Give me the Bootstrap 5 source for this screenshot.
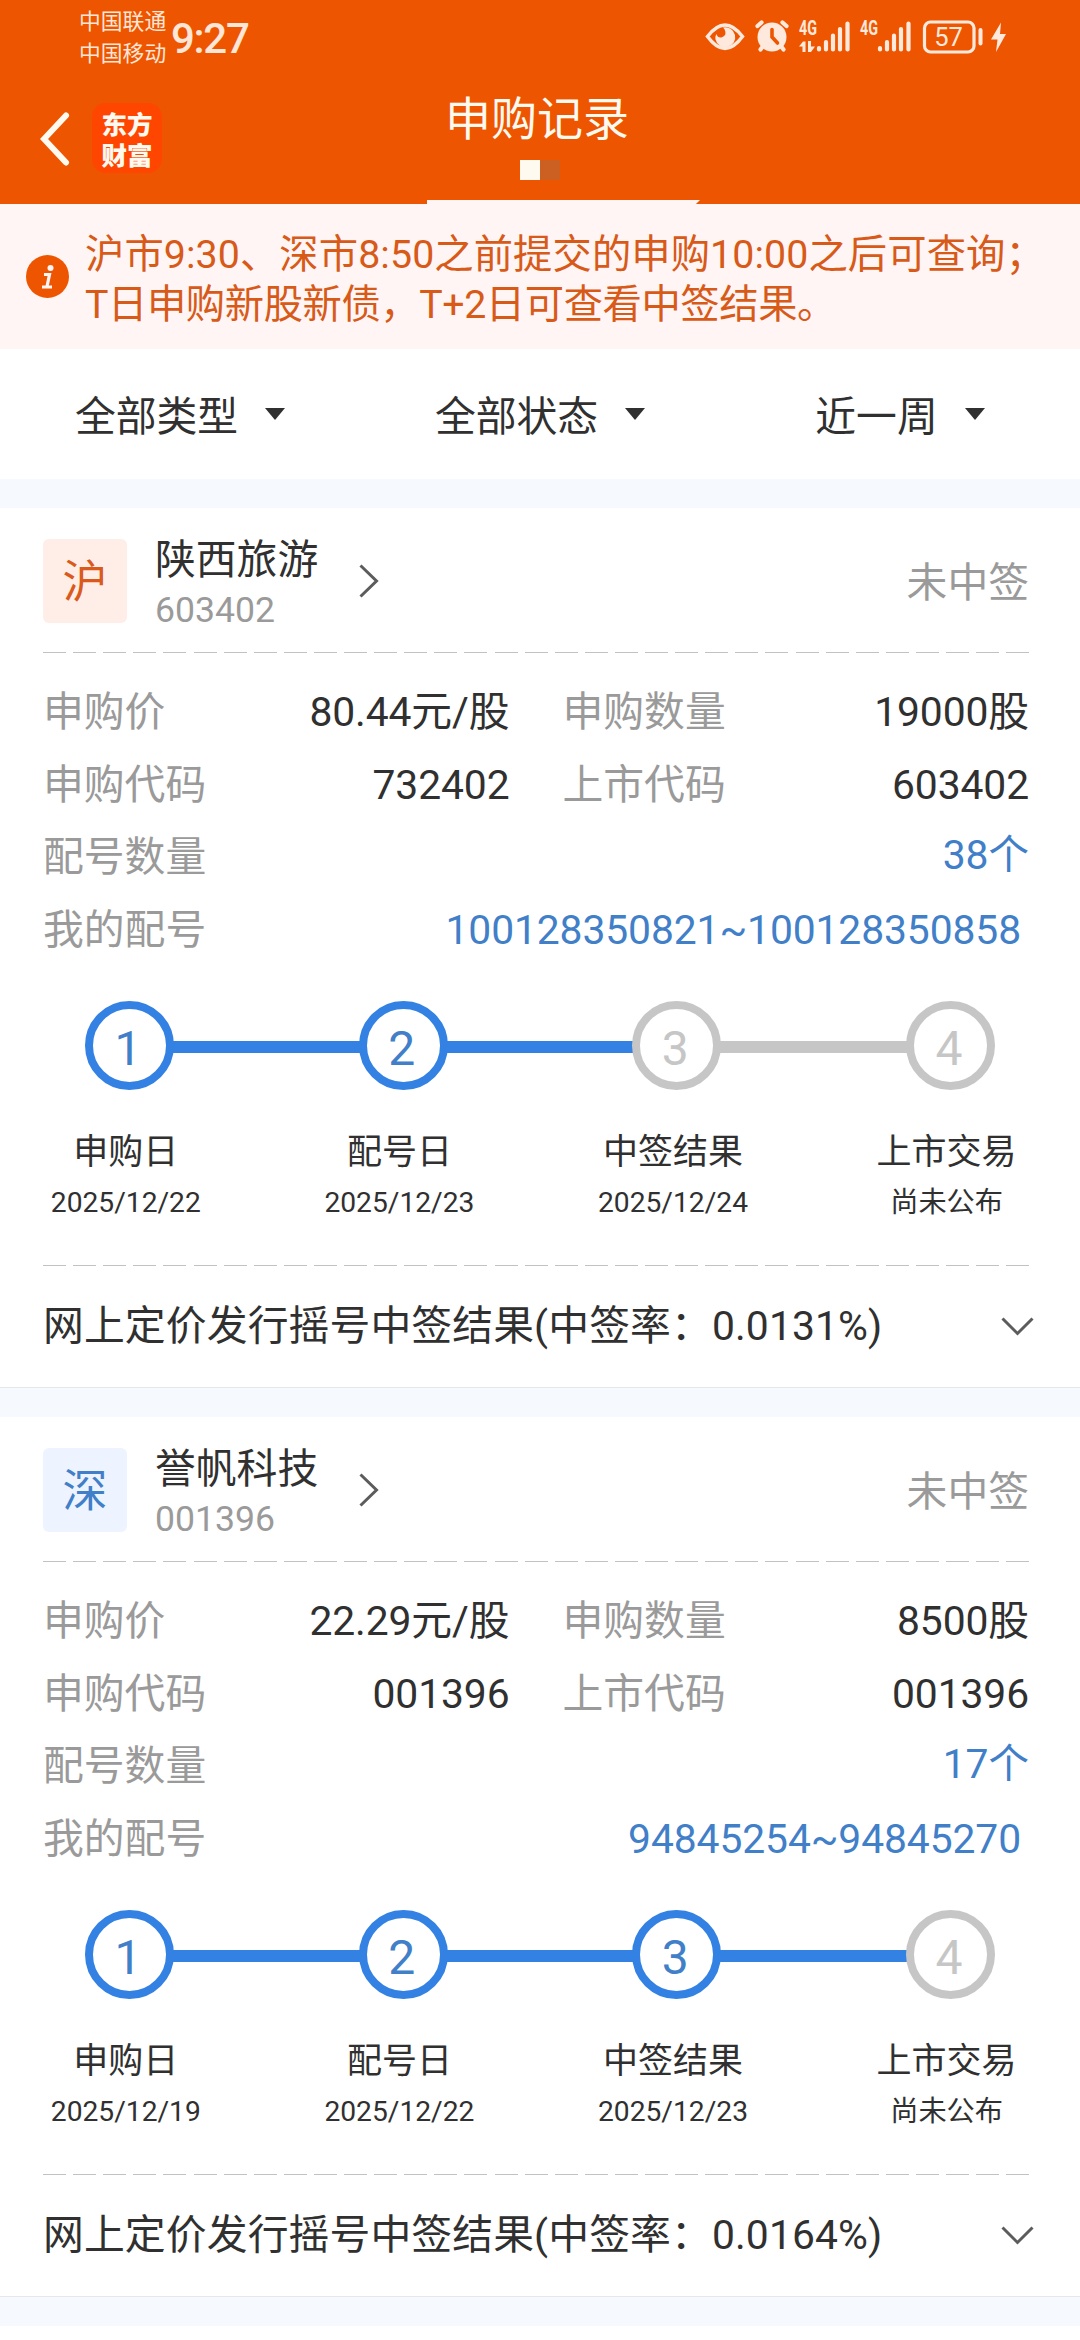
<!DOCTYPE html>
<html lang="zh-CN">
<head>
<meta charset="utf-8">
<meta name="viewport" content="width=device-width, initial-scale=1">
<title>申购记录</title>
<link href="https://cdn.jsdelivr.net/npm/bootstrap@5.3.0/dist/css/bootstrap.min.css" rel="stylesheet">
<style>
  :root { --brand:#ee5500; --blue:#3381e3; --link:#417fc8; --ink:#303030; --muted:#9a9a9a; --off:#c6c6c6; }
  body { font-family:Roboto,"Noto Sans CJK SC",sans-serif; font-size:40.8px; line-height:50px; color:var(--ink); background:#fff; width:1080px; height:2340px; overflow:hidden; }
  svg { display:block; flex:none; }
  .app-top { background:var(--brand); height:204px; color:#fffaf0; }
  .status { height:76px; padding-left:79px; color:#ffe6d6; }
  .carriers { font-size:21.8px; line-height:32px; padding-top:6px; width:92px; }
  .clock { font-size:42px; line-height:77px; letter-spacing:-1.3px; font-weight:500; }
  .status svg { margin-left:auto; }
  .titlebar { height:128px; }
  .back { margin:36px 0 0 40px; }
  .logo { width:70px; height:70px; margin:27px 0 0 22px; border-radius:14px; background:#ff4600; font-family:"Noto Sans CJK SC",sans-serif; font-weight:900; font-size:25.5px; line-height:31px; }
  .page-title { font-size:46px; line-height:56px; width:273px; margin-left:265px; height:128px; padding-top:15px; }
  .page-title > span { display:block; padding-left:18px; }
  .pager { margin:13px 0 0 93px; }
  .pager i { width:20px; height:20px; background:#fffaf0; }
  .pager i + i { background:#cc5f22; }
  .tab-line { height:4px; background:#fff5f5; width:273px; margin:20px 0 0; clip-path:polygon(0 0,100% 0,98.500% 100%,0 100%); }
  .notice { background:#fff5f5; height:145px; padding-left:26px; color:#d85a18; font-size:39.3px; line-height:50px; }
  .notice p { margin:7px 0 0 16px; white-space:nowrap; letter-spacing:.1px; }
  .notice p span { letter-spacing:-.4px; }
  .filters { height:130px; }
  .filters .col > div { gap:27px; }
  .filters span { padding-top:6px; }
  .band { height:29px; background:#f6faff; }
  .record { height:880px; border-bottom:1px solid #e7e7e7; padding:0 51px 0 43px; }
  .head { height:144px; padding-top:1px; }
  .market { width:84px; height:84px; padding-top:4px; border-radius:6px; font-size:45px; background:#ffeee7; color:#d95a1c; }
  .market.sz { background:#edf3ff; color:var(--link); }
  .who { margin:8px 42px 0 28px; line-height:50px; width:162px; }
  .who small { display:block; font-size:35.6px; line-height:50px; color:var(--muted); }
  .soft { color:var(--muted); }
  .result { padding-top:5px; }
  .dash { height:1px; background:repeating-linear-gradient(90deg,#c2c2c2 0 23px,transparent 23px 30.1px); }
  .facts { padding-top:23px; letter-spacing:-.1px; }
  .facts .soft { letter-spacing:0; }
  .facts > div { height:72.6px; }
  .half { width:466.5px; }
  .blue { color:var(--link); }
  .track { margin:35px 34px 0 42px; height:89px; }
  .dot { width:89px; height:89px; border:8px solid var(--off); border-radius:50%; color:var(--off); font-size:48px; padding:7px 3px 0 0; flex:none; }
  .seg { height:12px; background:var(--off); flex:1; margin:3px -2px 0; }
  .dot.on { border-color:var(--blue); color:var(--link); }
  .seg.on { background:var(--blue); }
  .names { margin:38px -60px 0 -54px; height:137px; }
  .names > div { width:273.6px; flex:none; font-size:35px; line-height:50px; }
  .names small { display:block; font-size:28.2px; line-height:50px; }
  .foot { height:120px; letter-spacing:.13px; margin-right:-5px; }
</style>
<script src="https://cdn.jsdelivr.net/npm/bootstrap@5.3.0/dist/js/bootstrap.bundle.min.js"></script>
</head>
<body>
<header class="app-top">
  <div class="status d-flex">
    <div class="carriers">中国联通<br>中国移动</div>
    <div class="clock">9:27</div>
    <svg width="380" height="76" viewBox="700 0 380 76" fill="#ffe9dc">
      <path d="M707.500 36.500Q725 13.500 742.500 36.500Q725 60.500 707.500 36.500Z" fill="none" stroke="#ffe9dc" stroke-width="3.500"/>
      <path d="M723 27.500a10 10 0 1 1-7.500 12q-.5-3 .8-5.500q1.500 4 5 3.500q5-1.500 4-6q-.5-2.500-2.300-4z"/>
      <circle cx="772" cy="37" r="14.500"/>
      <g stroke="#ffe9dc" stroke-width="4.200" stroke-linecap="round"><path d="M757.500 26l4-3.500M786.500 26l-4-3.500M760.500 49.500l3-4M783.500 49.500l-3-4"/></g>
      <path d="M772 29.500v7.500l5.500 6" stroke="#ee5500" stroke-width="3.600" stroke-linecap="round" fill="none"/>
      <text x="799" y="35" font-size="20" font-weight="700" textLength="18" lengthAdjust="spacingAndGlyphs">4G</text>
      <text x="860" y="35" font-size="20" font-weight="700" textLength="18" lengthAdjust="spacingAndGlyphs">4G</text>
      <path d="M799 46.500l4-5h2.500v10.500h-3v-5.500zM808 41h3v5.500h4l-4 5.500h-3z"/>
      <g stroke="#ffe9dc" stroke-width="4.200" stroke-linecap="round"><path d="M819 48v1.500M826 42v7.500M833 35.500v14M840 29v20.500M847.500 23.500v26"/><path d="M880 48v1.500M887 42v7.500M894 35.500v14M901 29v20.500M908.500 23.500v26"/></g>
      <rect x="924.500" y="22" width="49.500" height="30" rx="6" fill="none" stroke="#ffe9dc" stroke-width="3.200"/>
      <text x="948.500" y="46" font-size="25.500" text-anchor="middle">57</text>
      <rect x="978.500" y="28" width="4" height="17.500" rx="2"/>
      <path d="M1001 22.500L991 39.500h6.500l-1.500 12.500 10-18h-6z"/>
    </svg>
  </div>
  <div class="titlebar d-flex">
    <svg class="back" width="30" height="54" viewBox="0 0 30 54"><path d="M26 3.500L4 27l22 23.500" fill="none" stroke="#fffaf0" stroke-width="6" stroke-linecap="round"/></svg>
    <div class="logo d-flex align-items-center justify-content-center text-center">东方<br>财富</div>
    <div class="page-title text-nowrap"><span>申购记录</span>
      <div class="pager d-flex"><i></i><i></i></div>
      <div class="tab-line"></div>
    </div>
  </div>
</header>
<section class="notice d-flex align-items-center">
  <svg width="43" height="43" viewBox="0 0 43 43"><circle cx="21.500" cy="21.500" r="21.500" fill="#ee5500"/><circle cx="24.500" cy="13" r="3" fill="#fff5f5"/><path d="M18 19.500h5.500l-2.500 12M16 32h10" fill="none" stroke="#fff5f5" stroke-width="3.200"/></svg>
  <p>沪市9:30、深市8:50之前提交的申购10:00之后可查询；<br><span>T日申购新股新债，T+2日可查看中签结果。</span></p>
</section>
<nav class="filters row g-0 align-items-center">
  <div class="col"><div class="d-flex justify-content-center align-items-center"><span>全部类型</span><svg width="20" height="12"><path d="M0 0h20L10 12z" fill="#303030"/></svg></div></div>
  <div class="col"><div class="d-flex justify-content-center align-items-center"><span>全部状态</span><svg width="20" height="12"><path d="M0 0h20L10 12z" fill="#303030"/></svg></div></div>
  <div class="col"><div class="d-flex justify-content-center align-items-center"><span>近一周</span><svg width="20" height="12"><path d="M0 0h20L10 12z" fill="#303030"/></svg></div></div>
</nav>
<div class="band"></div>
<main id="records"></main>
<script>
const records = [
  {m:'沪',c:'',name:'陕西旅游',code:'603402',price:'80.44',qty:'19000',apply:'732402',n:38,range:'100128350821~100128350858',done:2,dates:['2025/12/22','2025/12/23','2025/12/24','尚未公布'],rate:'0.0131'},
  {m:'深',c:'sz',name:'誉帆科技',code:'001396',price:'22.29',qty:'8500',apply:'001396',n:17,range:'94845254~94845270',done:3,dates:['2025/12/19','2025/12/22','2025/12/23','尚未公布'],rate:'0.0164'}
];
const names = ['申购日','配号日','中签结果','上市交易'];
const pair = (k,v) => `<div class="half d-flex justify-content-between"><span class="soft">${k}</span><span>${v}</span></div>`;
document.getElementById('records').innerHTML = records.map(r => `
<article class="record">
  <div class="head d-flex align-items-center">
    <div class="market ${r.c} d-flex align-items-center justify-content-center">${r.m}</div>
    <div class="who text-nowrap">${r.name}<small>${r.code}</small></div>
    <svg width="20" height="34" viewBox="0 0 20 34"><path d="M1.500 1.500L17.500 17L1.500 32.500" fill="none" stroke="#5c5c5c" stroke-width="3"/></svg>
    <span class="soft result ms-auto">未中签</span>
  </div>
  <div class="dash"></div>
  <div class="facts">
    <div class="d-flex justify-content-between align-items-center">${pair('申购价',r.price+'元/股')}${pair('申购数量',r.qty+'股')}</div>
    <div class="d-flex justify-content-between align-items-center">${pair('申购代码',r.apply)}${pair('上市代码',r.code)}</div>
    <div class="d-flex justify-content-between align-items-center"><span class="soft">配号数量</span><span class="blue pb-1">${r.n}个</span></div>
    <div class="d-flex justify-content-between align-items-center"><span class="soft">我的配号</span><span class="blue pe-2">${r.range}</span></div>
  </div>
  <div class="track d-flex align-items-center">${names.map((_,i) => `${i ? `<div class="seg ${i<=r.done?'on':''}"></div>` : ''}<div class="dot ${i<r.done?'on':''} d-flex align-items-center justify-content-center">${i+1}</div>`).join('')}</div>
  <div class="names d-flex">${names.map((t,i) => `<div class="text-center">${t}<small>${r.dates[i]}</small></div>`).join('')}</div>
  <div class="dash"></div>
  <div class="foot d-flex align-items-center justify-content-between text-nowrap"><span>网上定价发行摇号中签结果(中签率：${r.rate}%)</span>
    <svg width="33" height="19" viewBox="0 0 33 19"><path d="M1.500 1.500L16.500 16.500L31.500 1.500" fill="none" stroke="#5c5c5c" stroke-width="3"/></svg></div>
</article>
<div class="band"></div>`).join('');
</script>
</body>
</html>
